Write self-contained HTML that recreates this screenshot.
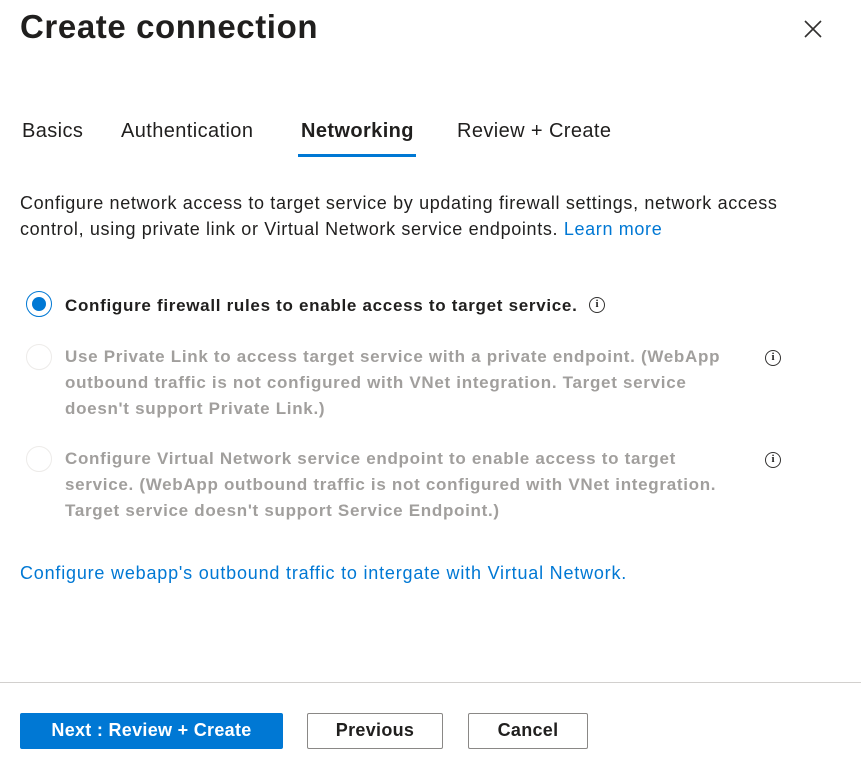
<!DOCTYPE html>
<html><head><meta charset="utf-8"><style>
*{margin:0;padding:0;box-sizing:border-box}
body{width:861px;height:776px;background:#fff;font-family:"Segoe UI","Liberation Sans",sans-serif;color:#201f1e;position:relative;overflow:hidden}
.a{position:absolute;white-space:nowrap}
h1{position:absolute;left:20px;top:8px;font-size:33px;font-weight:600;letter-spacing:0.6px}
.tab{position:absolute;top:120px;font-size:20px;color:#201f1e;letter-spacing:0.4px}
.p{font-size:18px;line-height:26px;letter-spacing:0.65px}
.opt{font-size:17px;font-weight:600;line-height:26px;letter-spacing:0.7px}
.dis{color:#a19f9d}
.radio{position:absolute;width:26px;height:26px;border-radius:50%;border:1px solid #edebe9}
.info{position:absolute;width:16px;height:16px;border:1.3px solid #323130;border-radius:50%;font-size:11px;font-weight:bold;text-align:center;line-height:13px;font-family:"Liberation Serif",serif}
a{color:#0078d4;text-decoration:none}
.btn{position:absolute;top:713px;height:36px;border:1px solid #8a8886;border-radius:2px;font-size:18px;font-weight:600;text-align:center;line-height:33px;background:#fff;letter-spacing:0.3px}
</style></head><body>
<h1>Create connection</h1>
<svg class="a" style="left:804px;top:20px" width="18" height="18" viewBox="0 0 18 18"><path d="M1 1L17 17M17 1L1 17" stroke="#323130" stroke-width="1.6"/></svg>
<div class="tab" style="left:22px">Basics</div>
<div class="tab" style="left:121px">Authentication</div>
<div class="tab" style="left:301px;font-weight:600">Networking</div>
<div class="a" style="left:298px;top:154px;width:118px;height:3px;background:#0078d4"></div>
<div class="tab" style="left:457px">Review + Create</div>
<div class="a p" style="left:20px;top:190px">Configure network access to target service by updating firewall settings, network access<br>control, using private link or Virtual Network service endpoints. <a>Learn more</a></div>
<div class="radio" style="left:26px;top:291px;border:1px solid #0078d4"><div style="position:absolute;left:5px;top:5px;width:14px;height:14px;border-radius:50%;background:#0078d4"></div></div>
<div class="a opt" style="left:65px;top:293px">Configure firewall rules to enable access to target service.</div>
<div class="info" style="left:589px;top:297px">i</div>
<div class="radio" style="left:26px;top:344px"></div>
<div class="a opt dis" style="left:65px;top:344px">Use Private Link to access target service with a private endpoint. (WebApp<br>outbound traffic is not configured with VNet integration. Target service<br>doesn't support Private Link.)</div>
<div class="info" style="left:765px;top:350px">i</div>
<div class="radio" style="left:26px;top:446px"></div>
<div class="a opt dis" style="left:65px;top:446px">Configure Virtual Network service endpoint to enable access to target<br>service. (WebApp outbound traffic is not configured with VNet integration.<br>Target service doesn't support Service Endpoint.)</div>
<div class="info" style="left:765px;top:452px">i</div>
<div class="a p" style="left:20px;top:560px;letter-spacing:0.8px"><a>Configure webapp's outbound traffic to intergate with Virtual Network.</a></div>
<div class="a" style="left:0;top:682px;width:861px;height:1px;background:#d2d0ce"></div>
<div class="btn" style="left:20px;width:263px;background:#0078d4;border-color:#0078d4;color:#fff">Next : Review + Create</div>
<div class="btn" style="left:307px;width:136px">Previous</div>
<div class="btn" style="left:468px;width:120px">Cancel</div>
</body></html>
